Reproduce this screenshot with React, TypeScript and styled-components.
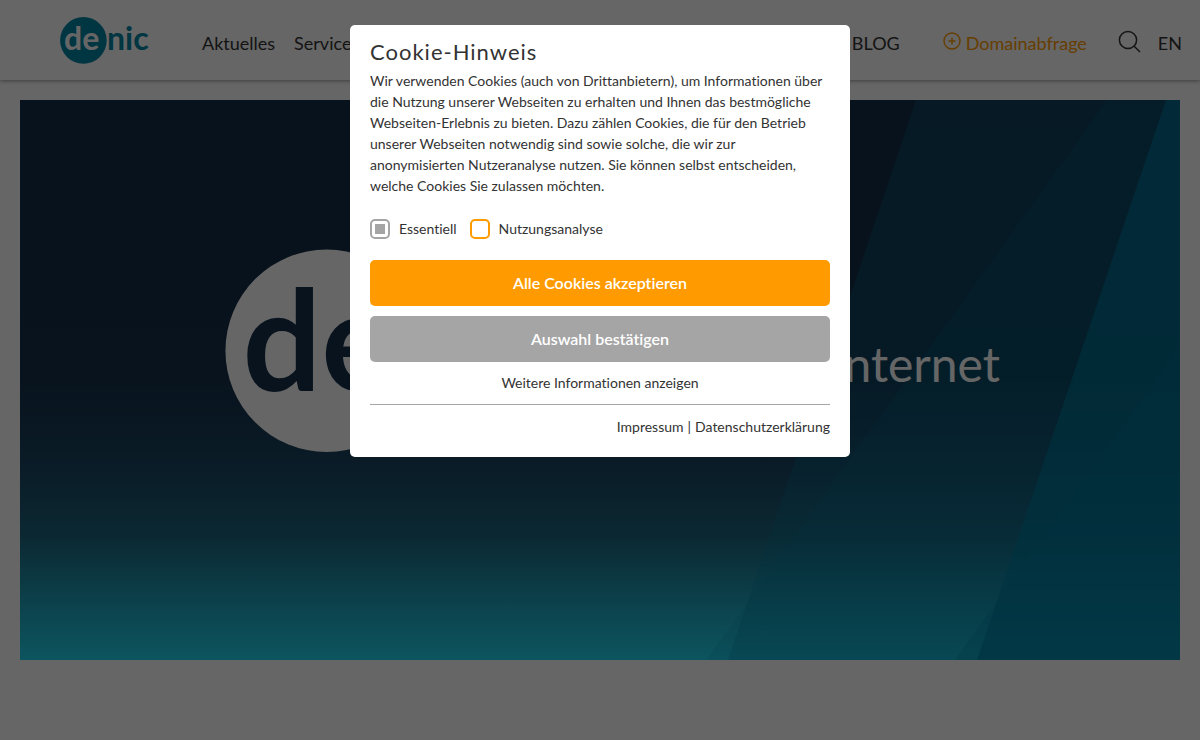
import React, { useState } from "react";
import styled, { createGlobalStyle } from "styled-components";

const Global = createGlobalStyle`
  *, *::before, *::after { box-sizing: border-box; }
  body {
    margin: 0;
    background: #fff;
    color: #333;
    font-family: Lato, "Liberation Sans", sans-serif;
    font-size: 14px;
    line-height: 21px;
    font-variant-ligatures: none;
  }
  a { color: inherit; text-decoration: none; }
`;

const Page = styled.div`
  min-height: 100vh;
`;

const Header = styled.header`
  display: flex;
  align-items: center;
  height: 80px;
  padding: 0 18px 0 60px;
  box-shadow: 0 1px 4px rgba(0, 0, 0, 0.4);
`;

const LogoLink = styled.a`
  display: block;
  width: 92px;
`;

const LogoArt = styled.svg`
  display: block;
  width: 100%;
  height: auto;
  font-family: Lato, "Liberation Sans", sans-serif;
  font-size: 32px;
  font-weight: 700;
`;

const Nav = styled.nav`
  display: flex;
  flex: 1;
  gap: 19px;
  margin-left: 50px;
  padding-top: 6px;
  font-size: 18px;
  line-height: 24px;
`;

const Tools = styled.div`
  display: flex;
  align-items: center;
  padding-top: 6px;
  font-size: 18px;
  line-height: 24px;
`;

const DomainLink = styled.a`
  display: flex;
  align-items: flex-start;
  gap: 5px;
  margin: 0 31px 0 43px;
  color: #ff9b00;
`;

const IconButton = styled.button`
  display: flex;
  margin: 0 17px 4px 0;
  padding: 0;
  border: 0;
  background: none;
  color: #333;
`;

const Hero = styled.main`
  position: relative;
  height: 560px;
  margin: 20px 20px 80px;
  overflow: hidden;
  background: #142f48;
`;

const HeroArt = styled.svg`
  display: block;
  width: 100%;
  height: 100%;
`;

const HeroContent = styled.div`
  position: absolute;
  inset: 0;
  display: flex;
  align-items: flex-start;
  justify-content: space-between;
  padding: 149px 180px 0 205px;
`;

const HeroLogo = styled.div`
  width: 400px;
`;

const Slogan = styled.p`
  margin: 85px 0 0;
  color: #fff;
  font-size: 48px;
  line-height: 60px;
`;

const Overlay = styled.div`
  position: fixed;
  inset: 0;
  display: flex;
  align-items: flex-start;
  justify-content: center;
  padding-top: 25px;
  background: rgba(0, 0, 0, 0.6);
`;

const Dialog = styled.section`
  width: 500px;
  max-width: 100%;
  padding: 13px 20px 20px;
  border-radius: 5px;
  background: #fff;
`;

const Title = styled.h2`
  margin: 0;
  font-size: 22px;
  font-weight: 400;
  line-height: 28px;
  letter-spacing: 1px;
`;

const Copy = styled.p`
  margin: 4px 0 22px;
`;

const Options = styled.div`
  display: flex;
  align-items: center;
  gap: 13px;
`;

const Option = styled.label`
  display: flex;
  align-items: center;
  gap: 9px;
`;

const Check = styled.input<{ $tone: string }>`
  appearance: none;
  width: 20px;
  height: 20px;
  margin: 0;
  border: 2px solid ${(p) => p.$tone};
  border-radius: 5px;
  background: #fff;
  &:checked {
    padding: 3px;
    background: ${(p) => p.$tone} content-box;
  }
`;

const Actions = styled.div`
  display: grid;
  gap: 10px;
  margin-top: 21px;
`;

const Action = styled.button<{ $tone: string }>`
  padding: 11px 20px;
  border: 0;
  border-radius: 5px;
  background: ${(p) => p.$tone};
  color: #fff;
  font: 600 16px/24px Lato, "Liberation Sans", sans-serif;
  font-variant-ligatures: none;
`;

const More = styled.a`
  display: block;
  margin-top: 10px;
  padding-bottom: 11px;
  border-bottom: 1px solid #a5a5a5;
  text-align: center;
`;

const Legal = styled.footer`
  display: flex;
  justify-content: flex-end;
  gap: 4px;
  margin-top: 11px;
`;

function Logo({ disc, inner, outer }: { disc: string; inner: string; outer: string }) {
  return (
    <LogoArt viewBox="0 0 92 47" role="img" aria-label="denic">
      <circle cx="23.4" cy="23.4" r="23.3" fill={disc} />
      <text x="4" y="32.600" fill={inner}>de</text>
      <text x="47" y="32.600" fill={outer}>nic</text>
    </LogoArt>
  );
}

export default function App() {
  const [usage, setUsage] = useState(false);
  return (
    <Page>
      <Global />
      <Header>
        <LogoLink href="#">
          <Logo disc="#0087a5" inner="#fff" outer="#0087a5" />
        </LogoLink>
        <Nav>
          <a href="#aktuelles">Aktuelles</a>
          <a href="#services">Services</a>
        </Nav>
        <Tools>
          <a href="#blog">BLOG</a>
          <DomainLink href="#domain">
            <svg width="18" height="20" viewBox="0 0 18 20" fill="none" stroke="currentColor" strokeWidth="1.400">
              <circle cx="9" cy="10" r="8" />
              <path d="M9 6.500v7M5.500 10h7" />
            </svg>
            Domainabfrage
          </DomainLink>
          <IconButton type="button" aria-label="Suche">
            <svg width="23" height="23" viewBox="0 0 23 23" fill="none" stroke="currentColor" strokeWidth="1.500">
              <circle cx="10" cy="10" r="8.600" />
              <path d="M16 16l6 6" />
            </svg>
          </IconButton>
          <a href="#en">EN</a>
        </Tools>
      </Header>
      <Hero>
        <HeroArt viewBox="0 0 1160 560" preserveAspectRatio="none" aria-hidden="true">
          <defs>
            <linearGradient id="base" x1="0" y1="0" x2="0" y2="1">
              <stop offset="0" stopColor="#142d47" />
              <stop offset="0.500" stopColor="#15304a" />
              <stop offset="0.660" stopColor="#1a4763" />
              <stop offset="0.780" stopColor="#1d667f" />
              <stop offset="0.900" stopColor="#1ea5be" />
              <stop offset="1" stopColor="#20d4ee" />
            </linearGradient>
          </defs>
          <rect width="1160" height="560" fill="url(#base)" />
          <g fill="#007da0">
            <path d="M896 0H1160V560H708Z" fillOpacity="0.25" />
            <path d="M1087 0H1160V560H686Z" fillOpacity="0.14" />
            <path d="M1146 0H1160V560H957Z" fillOpacity="0.6" />
            <path d="M1160 246V560H935Z" fillOpacity="0.25" />
          </g>
        </HeroArt>
        <HeroContent>
          <HeroLogo>
            <Logo disc="#fff" inner="#14304a" outer="#fff" />
          </HeroLogo>
          <Slogan>Internet</Slogan>
        </HeroContent>
      </Hero>
      <Overlay>
        <Dialog role="dialog" aria-modal="true" aria-labelledby="cookie-title">
          <Title id="cookie-title">Cookie-Hinweis</Title>
          <Copy>
            Wir verwenden Cookies (auch von Drittanbietern), um Informationen über die Nutzung unserer Webseiten zu erhalten und Ihnen das bestmögliche Webseiten-Erlebnis zu bieten. Dazu zählen Cookies, die für den Betrieb unserer Webseiten notwendig sind sowie solche, die wir zur anonymisierten Nutzeranalyse nutzen. Sie können selbst entscheiden, welche Cookies Sie zulassen möchten.
          </Copy>
          <Options>
            <Option>
              <Check $tone="#a5a5a5" type="checkbox" checked readOnly />
              Essentiell
            </Option>
            <Option>
              <Check $tone="#ff9b00" type="checkbox" checked={usage} onChange={(e) => setUsage(e.target.checked)} />
              Nutzungsanalyse
            </Option>
          </Options>
          <Actions>
            <Action $tone="#ff9b00" type="button">Alle Cookies akzeptieren</Action>
            <Action $tone="#a5a5a5" type="button">Auswahl bestätigen</Action>
          </Actions>
          <More href="#mehr">Weitere Informationen anzeigen</More>
          <Legal>
            <a href="#impressum">Impressum</a>|<a href="#datenschutz">Datenschutzerklärung</a>
          </Legal>
        </Dialog>
      </Overlay>
    </Page>
  );
}
